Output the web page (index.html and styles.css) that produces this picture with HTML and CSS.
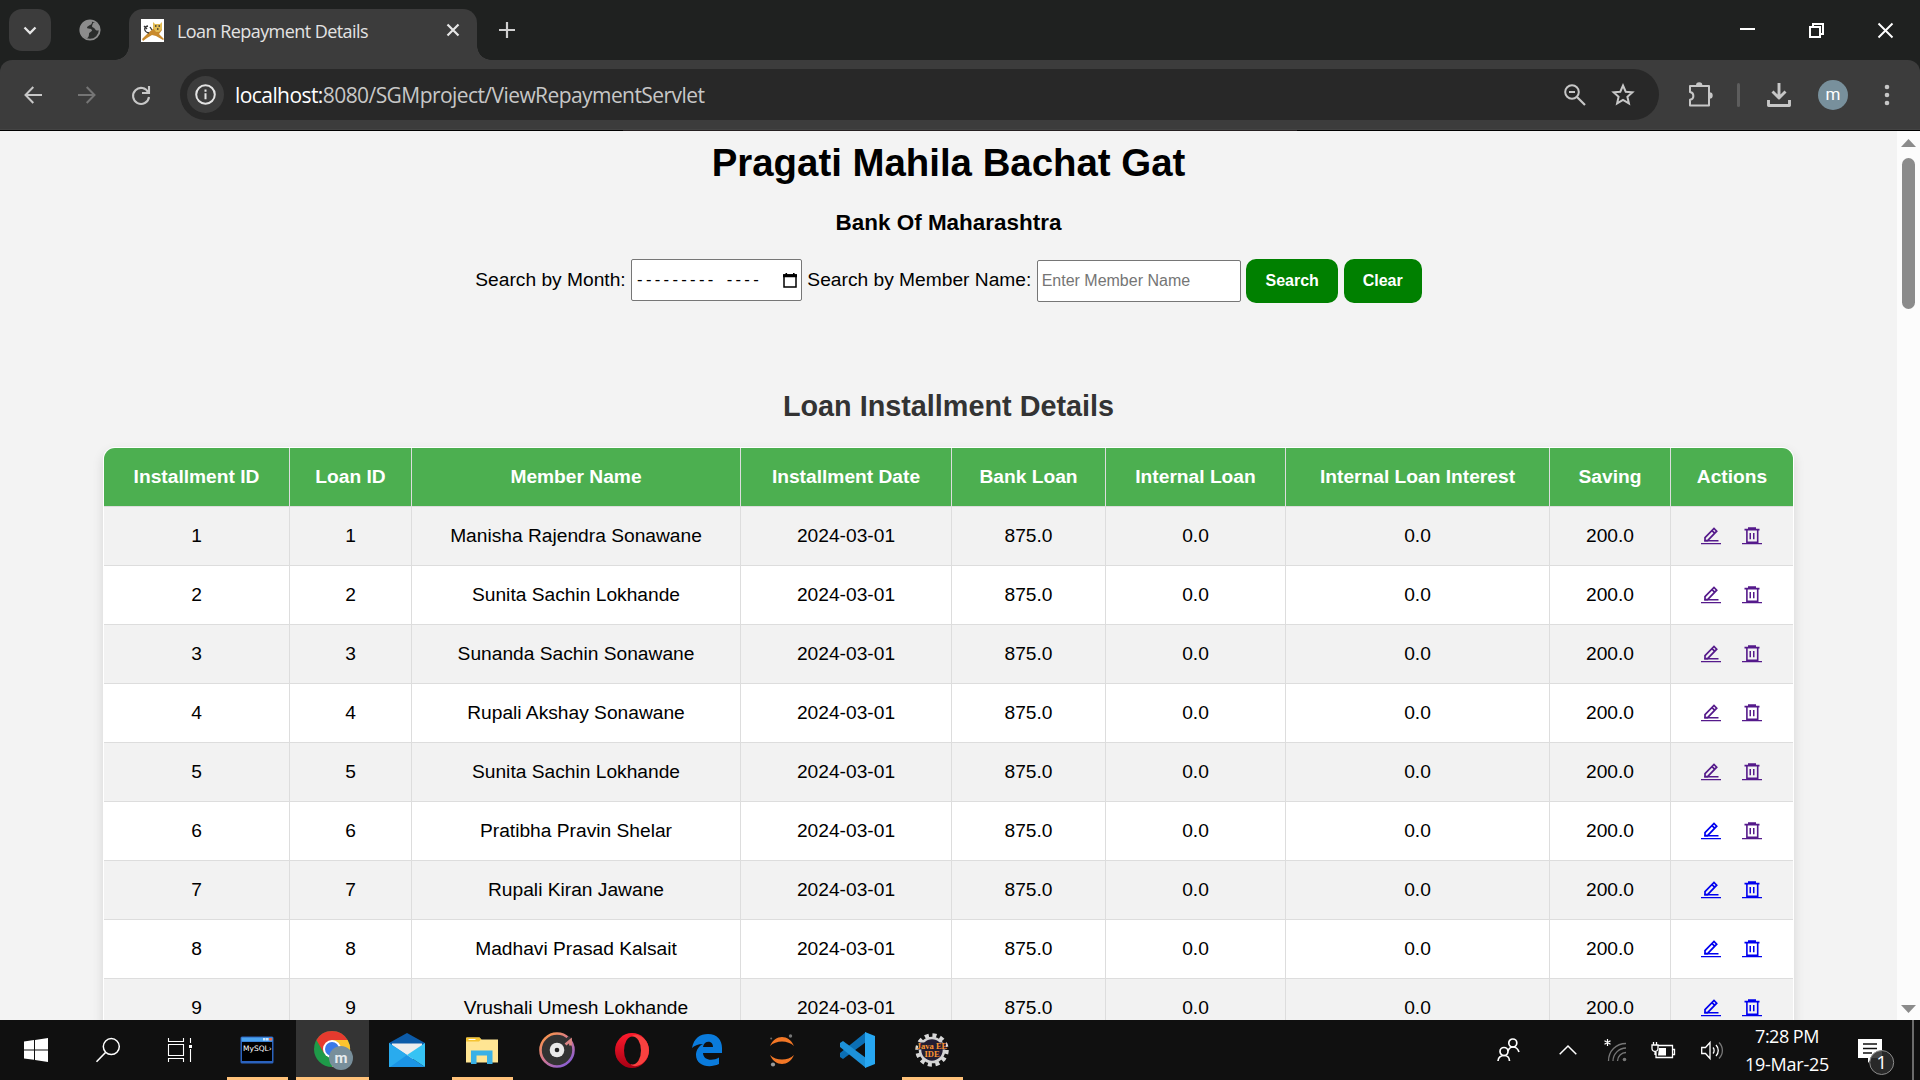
FILE: index.html
```html
<!DOCTYPE html>
<html lang="en">
<head>
<meta charset="utf-8">
<title>Loan Repayment Details</title>
<link rel="stylesheet" href="styles.css">
</head>
<body>
<svg class="defs" aria-hidden="true">
  <symbol id="edit" viewBox="0 0 20 18"><path d="M4 13.700V10.600L13 1.500L15.700 4.200L6.600 13.700zM11 3.600L13.600 6.200" fill="none" stroke="currentColor" stroke-width="1.700"/><path d="M3.300 13h14.200v1.500H3.300zM0 16h20v1.200H0z" fill="currentColor"/></symbol>
  <symbol id="trash" viewBox="0 0 20 18"><path d="M6 .3h8v1.5h3.500v1.600h-15V1.800h3.500zM0 16h20v1.200H0z" fill="currentColor"/><path d="M4.900 3v12.400h10.800V3" fill="none" stroke="currentColor" stroke-width="1.600"/><path d="M7.500 6h1.500v6.300H7.500zM11 6h1.500v6.300H11z" fill="currentColor"/></symbol>
</svg>
<div class="screen">
  <header class="tabstrip">
    <div class="tab-menu"><svg width="14" height="9" viewBox="0 0 14 9"><path d="M1.500 1.500L7 7l5.500-5.500" fill="none" stroke="#e6e6e6" stroke-width="2.300"/></svg></div>
    <svg class="globe" width="22" height="22" viewBox="0 0 22 22"><circle cx="11" cy="11" r="9.700" fill="#2b2d2c" stroke="#8c8c8c" stroke-width="1.800"/><path d="M1 10C2 5 6 1 12 1.500c2 1 1 4-1 4.500-1 1-3 1-3 3 1 1 4 0 5 2 0 2-3 2-3 4s-1 5-3 4C4 18 1 14 1 10zM14 4c3-1 6 2 7 6-1 2-4 2-5 0s-3-1-3-3z" fill="#8c8c8c"/></svg>
    <div class="tab">
      <svg width="23" height="23" viewBox="0 0 23 23"><path fill="#fff" d="M0 0h23v23H0z"/><path d="M1 20l6-6 5-4 2-3h6l1 4-3 4 5 5-1 1-7-4-4-1-5 3-4 3z" fill="#c98a2c"/><path d="M12 3l2 2h5l2-2v7l-3 3h-3l-3-4z" fill="#e2bc55"/><path d="M8 14C3 13 2 8 7 7M3 7l3 3M9 8l2 3M14 7h1.500m2 0H19M16 10h1.500" stroke="#333" stroke-width="1.300" fill="none"/></svg>
      <span class="tab-title">Loan Repayment Details</span>
      <svg width="14" height="14" viewBox="0 0 14 14"><path d="M1.500 1.500l11 11m0-11l-11 11" stroke="#e6e6e6" stroke-width="2.200"/></svg>
    </div>
    <svg class="new-tab" width="16" height="16" viewBox="0 0 16 16"><path d="M8 0v16M0 8h16" stroke="#d0d0d0" stroke-width="2.200"/></svg>
    <div class="win-controls">
      <svg width="15" height="16" viewBox="0 0 15 16"><path d="M0 6h15v2H0z" fill="#fff"/></svg>
      <svg width="15" height="15" viewBox="0 0 15 15"><path d="M1 4h10v10H1zM4 4V1h10v10h-3" fill="none" stroke="#fff" stroke-width="2"/></svg>
      <svg width="15" height="15" viewBox="0 0 15 15"><path d="M.5.5l14 14m0-14l-14 14" stroke="#fff" stroke-width="1.900"/></svg>
    </div>
  </header>
  <div class="toolbar-wrap">
  <nav class="toolbar">
    <div class="nav-buttons">
      <svg width="18" height="18" viewBox="0 0 18 18"><path d="M18 9H1.500M9.300 1L1.500 9l7.800 8" fill="none" stroke="#c7c7c7" stroke-width="2"/></svg>
      <svg width="18" height="18" viewBox="0 0 18 18"><path d="M0 9h16.500M8.700 1l7.800 8-7.800 8" fill="none" stroke="#757575" stroke-width="2"/></svg>
      <svg class="reload" width="20" height="20" viewBox="0 0 20 20"><path d="M17.300 7.500A8 8 0 1 0 18 12M18 1v7h-7" fill="none" stroke="#c7c7c7" stroke-width="2.100"/></svg>
    </div>
    <div class="omnibox">
      <span class="site-info"><svg width="21" height="21" viewBox="0 0 21 21"><circle cx="10.500" cy="10.500" r="9.300" fill="none" stroke="#e3e3e3" stroke-width="2"/><path d="M9.500 9.300h2v6h-2zM9.500 5.500h2v2.200h-2z" fill="#e3e3e3"/></svg></span>
      <span class="url"><b>localhost:</b>8080/SGMproject/ViewRepaymentServlet</span>
      <svg class="lens" width="22" height="22" viewBox="0 0 22 22"><circle cx="8" cy="8" r="6.800" fill="none" stroke="#c7c7c7" stroke-width="2"/><path d="M5 8h6M13 13l8 8" stroke="#c7c7c7" stroke-width="2.200"/></svg>
      <svg width="24" height="23" viewBox="0 0 24 23"><path d="M12 2.500l2.700 6.200 6.700.6-5 4.500 1.500 6.600-5.900-3.500-5.900 3.500 1.500-6.600-5-4.500 6.700-.6z" fill="none" stroke="#c7c7c7" stroke-width="2"/></svg>
    </div>
    <svg class="puzzle" width="26" height="26" viewBox="0 0 26 26"><path d="M3 4h19v19.500H3v-5.700c4.500-.8 4.500-7 0-7.800z" fill="none" stroke="#c7c7c7" stroke-width="2" stroke-linejoin="round"/><path d="M9 3.500a3.200 3.200 0 0 1 6.400 0zM22.500 10.300a3.200 3.200 0 0 1 0 6.400z" fill="#c7c7c7"/></svg>
    <i class="divider"></i>
    <svg class="download" width="24" height="24" viewBox="0 0 24 24"><path d="M12 0v14M5.500 8.500L12 15l6.500-6.500M1.500 17v5.500h21V17" fill="none" stroke="#c7c7c7" stroke-width="2.900" stroke-linejoin="round"/></svg>
    <span class="avatar">m</span>
    <svg width="6" height="22" viewBox="0 0 6 22"><g fill="#c7c7c7"><circle cx="3" cy="3" r="2.300"/><circle cx="3" cy="11" r="2.300"/><circle cx="3" cy="19" r="2.300"/></g></svg>
  </nav>
  </div>
  <div class="edge"><i></i></div>
  <div class="viewport">
    <main class="page">
      <h1>Pragati Mahila Bachat Gat</h1>
      <h3>Bank Of Maharashtra</h3>
      <form class="search">
        <label>Search by Month:</label>
        <div class="month"><span>---------</span><span>----</span><svg width="14" height="15" viewBox="0 0 14 15"><path d="M1 2h12v12H1z" fill="none" stroke="#000" stroke-width="1.500"/><path d="M0 1.200h14V4.200H0zM2.500 0h1.600v2H2.500zM10 0h1.600v2H10z"/></svg></div>
        <label>Search by Member Name:</label>
        <input class="member" type="text" placeholder="Enter Member Name">
        <button class="btn btn-search" type="button">Search</button>
        <button class="btn btn-clear" type="button">Clear</button>
      </form>
      <h2>Loan Installment Details</h2>
      <table class="loans">
        <colgroup><col class="c-id"><col class="c-loan"><col class="c-name"><col class="c-date"><col class="c-bank"><col class="c-int"><col class="c-rate"><col class="c-save"><col class="c-act"></colgroup>
        <thead><tr><th>Installment ID</th><th>Loan ID</th><th>Member Name</th><th>Installment Date</th><th>Bank Loan</th><th>Internal Loan</th><th>Internal Loan Interest</th><th>Saving</th><th>Actions</th></tr></thead>
        <tbody>
        <tr><td>1</td><td>1</td><td>Manisha Rajendra Sonawane</td><td>2024-03-01</td><td>875.0</td><td>0.0</td><td>0.0</td><td>200.0</td><td><div class="actions"><svg class="visited"><use href="#edit"/></svg><svg class="visited"><use href="#trash"/></svg></div></td></tr>
        <tr><td>2</td><td>2</td><td>Sunita Sachin Lokhande</td><td>2024-03-01</td><td>875.0</td><td>0.0</td><td>0.0</td><td>200.0</td><td><div class="actions"><svg class="visited"><use href="#edit"/></svg><svg class="visited"><use href="#trash"/></svg></div></td></tr>
        <tr><td>3</td><td>3</td><td>Sunanda Sachin Sonawane</td><td>2024-03-01</td><td>875.0</td><td>0.0</td><td>0.0</td><td>200.0</td><td><div class="actions"><svg class="visited"><use href="#edit"/></svg><svg class="visited"><use href="#trash"/></svg></div></td></tr>
        <tr><td>4</td><td>4</td><td>Rupali Akshay Sonawane</td><td>2024-03-01</td><td>875.0</td><td>0.0</td><td>0.0</td><td>200.0</td><td><div class="actions"><svg class="visited"><use href="#edit"/></svg><svg class="visited"><use href="#trash"/></svg></div></td></tr>
        <tr><td>5</td><td>5</td><td>Sunita Sachin Lokhande</td><td>2024-03-01</td><td>875.0</td><td>0.0</td><td>0.0</td><td>200.0</td><td><div class="actions"><svg class="visited"><use href="#edit"/></svg><svg class="visited"><use href="#trash"/></svg></div></td></tr>
        <tr><td>6</td><td>6</td><td>Pratibha Pravin Shelar</td><td>2024-03-01</td><td>875.0</td><td>0.0</td><td>0.0</td><td>200.0</td><td><div class="actions"><svg><use href="#edit"/></svg><svg class="visited"><use href="#trash"/></svg></div></td></tr>
        <tr><td>7</td><td>7</td><td>Rupali Kiran Jawane</td><td>2024-03-01</td><td>875.0</td><td>0.0</td><td>0.0</td><td>200.0</td><td><div class="actions"><svg><use href="#edit"/></svg><svg><use href="#trash"/></svg></div></td></tr>
        <tr><td>8</td><td>8</td><td>Madhavi Prasad Kalsait</td><td>2024-03-01</td><td>875.0</td><td>0.0</td><td>0.0</td><td>200.0</td><td><div class="actions"><svg><use href="#edit"/></svg><svg><use href="#trash"/></svg></div></td></tr>
        <tr><td>9</td><td>9</td><td>Vrushali Umesh Lokhande</td><td>2024-03-01</td><td>875.0</td><td>0.0</td><td>0.0</td><td>200.0</td><td><div class="actions"><svg><use href="#edit"/></svg><svg><use href="#trash"/></svg></div></td></tr>
        </tbody>
      </table>
    </main>
    <aside class="scrollbar">
      <svg width="15" height="8" viewBox="0 0 15 8"><path d="M7.500 0L15 8H0z" fill="#8b8b8b"/></svg>
      <i class="thumb"></i>
      <svg class="down" width="15" height="8" viewBox="0 0 15 8"><path d="M0 0h15L7.500 8z" fill="#8b8b8b"/></svg>
    </aside>
  </div>
  <footer class="taskbar">
    <div class="sys"><svg width="24" height="24" viewBox="0 0 24 24"><path d="M0 3.500l10-1.400v9.300H0zM11 2l13-2v11.400H11zM0 12.500h10v9.300L0 20.500zM11 12.500h13V24l-13-2z" fill="#fff"/></svg></div>
    <div class="sys"><svg width="24" height="24" viewBox="0 0 24 24"><circle cx="15.300" cy="8.600" r="8" fill="none" stroke="#fff" stroke-width="1.500"/><path d="M9.500 14.500L.500 23.800" stroke="#fff" stroke-width="1.600"/></svg></div>
    <div class="sys"><svg width="24" height="24" viewBox="0 0 24 24"><path d="M.5 0v3.500h15V0M.5 6.500h15v11h-15zM.5 24v-3.500h15V24M22.500 0v5M22.500 11v13" fill="none" stroke="#fff" stroke-width="1.100"/><path d="M21 7h3v3h-3z" fill="#fff"/></svg></div>
    <div class="apps">
      <div class="app running"><svg width="34" height="28" viewBox="0 0 34 28"><rect x=".5" y=".5" width="33" height="27" rx="1.500" fill="#2b62bd"/><path d="M1.500 1.500h31v4h-31z" fill="#4ba3ee"/><path d="M23 2h2.500v2.500H23zM26 2h2.500v2.500H26z" fill="#cde7ff"/><path d="M29 2h3v2.500h-3z" fill="#e46c4a"/><path d="M2 6h30v19H2z" fill="#000"/><text x="3" y="14.500" class="mysql">MySQL›</text></svg></div>
      <div class="app active"><svg width="40" height="40" viewBox="0 0 40 40"><circle cx="18" cy="18" r="18" fill="#1e9a48"/><path d="M2.400 9A18 18 0 0 1 33.600 9H18l-7.800 13.500z" fill="#e63a2e"/><path d="M33.600 9A18 18 0 0 1 18 36l7.800-13.500L18 9z" fill="#fcc42d"/><circle cx="18" cy="18" r="9" fill="#fff"/><circle cx="18" cy="18" r="7" fill="#3b79e8"/><circle cx="27" cy="27" r="12" fill="#788f9b"/><text x="27" y="31.500" class="badge-m">m</text></svg></div>
      <div class="app"><svg width="36" height="34" viewBox="0 0 36 34"><path d="M0 10L18 0l18 10v12H0z" fill="#0c5ba8"/><path d="M3 10.500h30V21L18 29 3 21z" fill="#ededed"/><path d="M0 10l18 12L36 34H0z" fill="#1b94e5"/><path d="M0 10l18 12L1 34H0z" fill="#29abee"/><path d="M36 10v24L18 22z" fill="#36c3f4"/></svg></div>
      <div class="app running"><svg width="32" height="27" viewBox="0 0 32 27"><path d="M0 1.500Q0 .5 1 .5h12.500l2 2H32v23H0z" fill="#ffe593"/><path d="M0 4.500V1.500Q0 .500 1 .500h12.500l1.500 2-2 2z" fill="#f5c431"/><path d="M2.500 2h7v1h-7z" fill="#fff"/><path d="M5 27V13.500h21.500V27H21v-8.500H10.500V27z" fill="#3ab1e6"/></svg></div>
      <div class="app"><svg width="36" height="36" viewBox="0 0 36 36"><defs><linearGradient id="ring" x1="0" y1="0" x2=".8" y2="1"><stop offset="0" stop-color="#ff9a3c"/><stop offset=".5" stop-color="#d77a8e"/><stop offset="1" stop-color="#855cd6"/></linearGradient></defs><circle cx="18" cy="18" r="16.500" fill="#333" stroke="url(#ring)" stroke-width="2.600"/><circle cx="18" cy="18" r="7.300" fill="#e9e9e9"/><circle cx="18" cy="18" r="2.300" fill="#222"/><path d="M31 5l-5 5" stroke="#333" stroke-width="3.500"/><path d="M26.500 12.500l5-4v5" fill="none" stroke="#dc8585" stroke-width="2.800"/></svg></div>
      <div class="app"><svg width="34" height="35" viewBox="0 0 34 35"><defs><linearGradient id="op" x1="0" y1="0" x2="0" y2="1"><stop offset="0" stop-color="#ff1b2d"/><stop offset="1" stop-color="#a70014"/></linearGradient></defs><ellipse cx="17" cy="17.500" rx="17" ry="17.500" fill="url(#op)"/><path d="M17 3c5-4 17 3 17 14.500S22 36 16 32z" fill="#f9413f"/><ellipse cx="17.500" cy="17.500" rx="8.500" ry="14" fill="#101010"/></svg></div>
      <div class="app"><svg width="30" height="32" viewBox="0 0 30 32"><path d="M0 14C2 4 8 0 16 0c9 0 14 6 14 14v5H11c.5 8 10 8 16 4.500V30C16 35 4 31 4 21c0-5 3-9 7-11-5 0-9 2-11 4zm11-1h10c0-7-9-7-10 0z" fill="#0a7bdc"/></svg></div>
      <div class="app"><svg width="24" height="33" viewBox="0 0 24 33"><path d="M0 12C5 0 19 0 24 12 18 6 6 6 0 12zM0 21c6 6 18 6 24 0-5 12-19 12-24 0z" fill="#f37726"/><circle cx="20.500" cy="2" r="1.700" fill="#777"/><circle cx="3" cy="30.500" r="2.100" fill="#999"/><circle cx="1.200" cy="4.500" r="1" fill="#666"/></svg></div>
      <div class="app"><svg width="36" height="36" viewBox="0 0 36 36"><path d="M1 25l3 2 23-17V0L1 21z" fill="#0b6fb5"/><path d="M1 11l3-2 23 17v10L1 15z" fill="#1d91d8"/><path d="M26 0l10 4v28l-10 4z" fill="#27a7f2"/></svg></div>
      <div class="app running"><svg width="34" height="34" viewBox="0 0 34 34"><circle cx="17" cy="17" r="14.500" fill="none" stroke="#d8d8d8" stroke-width="4.500" stroke-dasharray="4 3.592"/><circle cx="17" cy="17" r="12" fill="#221d33" stroke="#d3d3d3" stroke-width="2.600"/><path d="M3 9.500h28v7H3z" fill="#221d33"/><text x="17" y="15.700" class="ide">Java EE</text><text x="17" y="23.500" class="ide">IDE</text></svg></div>
    </div>
    <div class="tray">
      <svg class="people" width="23" height="24" viewBox="0 0 23 24"><g fill="none" stroke="#fff" stroke-width="1.700"><circle cx="15.800" cy="5" r="4"/><path d="M11 13c1-3 3-4 5-4 3 0 5 2 6 5"/><circle cx="7" cy="13.500" r="4"/><path d="M1 23c0-3.500 3-5.500 6-5.500s5.500 2 5.500 5.500"/></g></svg>
      <svg class="chev" width="18" height="10" viewBox="0 0 18 10"><path d="M.700 9.300L9 1l8.300 8.300" fill="none" stroke="#fff" stroke-width="1.500"/></svg>
      <svg class="wifi" width="23" height="23" viewBox="0 0 23 23"><g fill="none" stroke="#777" stroke-width="1.300"><path d="M4.500 22C4.500 12 12 4.500 22 4.500M9 22c0-7 6-13 13-13M13.500 22c0-4.500 4-8.500 8.500-8.500"/></g><circle cx="20.500" cy="20.500" r="1.800" fill="#777"/><path d="M3.500 0v7M.500 1.700l6 3.600M6.500 1.700l-6 3.600" stroke="#fff" stroke-width="1.200"/></svg>
      <svg class="battery" width="24" height="17" viewBox="0 0 24 17"><path d="M7 3.500h14.500v12H5V10M22 7.500h1.500v5H22M1 3h6v3.500a3 3 0 0 1-6 0zM2.500 3V0M5.500 3V0M4 9v4" fill="none" stroke="#fff" stroke-width="1.300"/><path d="M8 6h7v7.500H7z" fill="#fff"/></svg>
      <svg class="speaker" width="22" height="19" viewBox="0 0 22 19"><path d="M.7 6.500h3.800L9 1.500v16l-4.500-5H.7zM12 6.500c1.500 1.500 1.500 4.500 0 6M15 4c3 3 3 8 0 11" fill="none" stroke="#fff" stroke-width="1.300"/><path d="M18 1.500c4.500 4.500 4.500 11.500 0 16" fill="none" stroke="#777" stroke-width="1.300"/></svg>
      <div class="clock"><span class="time">7:28 PM</span><span class="date">19-Mar-25</span></div>
      <svg class="notify" width="38" height="38" viewBox="0 0 38 38"><path d="M0 1h24v19H14l-4 5v-5H0z" fill="#fff"/><path d="M5 6h14M5 10.500h14M5 15h9" stroke="#101010" stroke-width="1.300"/><circle cx="23.700" cy="24.500" r="12" fill="#2b2b2b" fill-opacity=".88" stroke="#8a8a8a" stroke-width="1"/><text x="23.700" y="31" class="count">1</text></svg>
    </div>
  </footer>
</div>
</body>
</html>
```
FILE: styles.css
```css
* { box-sizing: border-box; }
body { margin: 0; font-family: "Liberation Sans", Arial, sans-serif; font-size: 19.2px; color: #000; overflow: hidden; }
svg { display: block; flex: none; overflow: visible; }
.defs { display: none; }
.screen { width: 1920px; height: 1080px; display: flex; flex-direction: column; overflow: hidden; background: #1f2120; }

.tabstrip { height: 60px; flex: none; display: flex; align-items: center; padding-left: 9px; }
.tab-menu { width: 42px; height: 42px; border-radius: 13px; background: #3c3c3c; display: grid; place-items: center; }
.globe { margin-left: 28px; }
.tab { position: relative; align-self: flex-end; width: 348px; height: 51px; margin-left: 28px; padding: 0 17px 9px 12px; display: flex; align-items: center; background: #3c3c3c; border-radius: 14px 14px 0 0; }
.tab::before, .tab::after { content: ""; position: absolute; bottom: 0; width: 14px; height: 14px; }
.tab::before { left: -14px; background: radial-gradient(circle at 0 0, transparent 13.5px, #3c3c3c 14px); }
.tab::after { right: -14px; background: radial-gradient(circle at 100% 0, transparent 13.5px, #3c3c3c 14px); }
.tab-title { margin-left: 13px; flex: 1; font: 18px/24px "Open Sans", "Noto Sans", sans-serif; letter-spacing: -.56px; color: #e3e3e3; white-space: nowrap; padding-top: 2px; }
.new-tab { margin-left: 22px; }
.win-controls { margin-left: auto; padding-right: 27px; display: flex; gap: 54px; align-items: center; }

.toolbar-wrap { flex: none; height: 69px; background: #1f2120; }
.toolbar { height: 69px; background: #3c3c3c; border-radius: 12px 12px 0 0; display: flex; align-items: center; padding: 0 30px 0 24px; }
.toolbar > * { flex: none; }
.nav-buttons { display: flex; align-items: center; gap: 36px; width: 156px; }
.reload { margin-left: -1px; }
.omnibox { width: 1479px; height: 51px; border-radius: 26px; background: #282828; display: flex; align-items: center; padding: 0 24px 0 7px; }
.site-info { width: 37px; height: 37px; border-radius: 50%; background: #3c3c3c; display: grid; place-items: center; }
.url { margin-left: 11px; flex: 1; font: 21px/28px "Open Sans", "Noto Sans", sans-serif; letter-spacing: -.57px; color: #c7c7c7; }
.url b { font-weight: 400; color: #fff; }
.lens { margin-right: 25px; }
.puzzle { margin-left: 28px; }
.divider { width: 3px; height: 24px; border-radius: 2px; background: #5d5d5d; margin-left: 24px; }
.download { margin-left: 27px; }
.avatar { width: 30px; height: 30px; border-radius: 50%; background: #78909c; color: #fff; font: 17px/29px Roboto, sans-serif; text-align: center; margin: 0 36px 0 27px; }
.edge { height: 2px; flex: none; background: linear-gradient(#444 50%, #000 50%); display: flex; justify-content: center; align-items: flex-end; }
.edge i { width: 674px; height: 1px; background: #252021; }

.viewport { height: 889px; flex: none; display: flex; background: #f3f3f3; overflow: hidden; }
.page { width: 1897px; height: 889px; overflow: hidden; display: flex; flex-direction: column; align-items: center; padding-top: 9px; }
h1, h2, h3 { margin: 0; flex: none; }
h1 { font-size: 38.4px; line-height: 46px; }
h3 { font-size: 22.46px; line-height: 28px; margin-top: 23px; }
.search { display: flex; gap: 5.33px; align-items: center; height: 44px; margin-top: 22px; flex: none; }
.search label { line-height: 40px; padding-bottom: 3px; white-space: nowrap; }
.month, .member { border: 1px solid #767676; background: #fff; height: 42px; border-radius: 2px; }
.month { width: 171px; margin-bottom: 2px; padding: 0 4px 0 5px; display: flex; align-items: center; font-size: 16.67px; }
.month span { letter-spacing: 3.3px; white-space: nowrap; }
.month span + span { margin-left: 10px; }
.month svg { margin-left: auto; }
.member { width: 204px; padding: 1px 4px; font: 16px "Liberation Sans", Arial, sans-serif; }
.member::placeholder { color: #757575; }
.btn { height: 44px; border: 0; border-radius: 10px; padding: 0; background: #008000; color: #fff; font: bold 16px "Liberation Sans", Arial, sans-serif; }
.btn-search { width: 92.4px; }
.btn-clear { width: 78px; }
h2 { font-size: 28.8px; line-height: 36px; color: #333; margin-top: 85px; }

.loans { width: 1691px; flex: none; margin-top: 23px; table-layout: fixed; border-collapse: separate; border-spacing: 0; border: 1px solid #fff; border-bottom: 0; border-radius: 12px; background: #fff; box-shadow: 0 5px 12px rgba(0,0,0,.12); overflow: hidden; }
.c-id { width: 185px; } .c-loan { width: 122px; } .c-name { width: 329px; } .c-date { width: 211px; } .c-bank { width: 154px; } .c-int { width: 180px; } .c-rate { width: 264px; } .c-save { width: 121px; } .c-act { width: 123px; }
.loans th, .loans td { padding: 0; text-align: center; white-space: nowrap; border-left: 1px solid #ddd; }
.loans th:first-child, .loans td:first-child { border-left: 0; }
.loans th { height: 58px; background: #4caf50; color: #fff; line-height: 58px; }
.loans td { height: 59px; border-top: 1px solid #ddd; line-height: 58px; }
.loans tbody tr:nth-child(odd) { background: #f2f2f2; }
.actions { display: flex; justify-content: center; gap: 21.5px; padding-right: 1px; color: #00e; }
.actions svg { width: 20px; height: 18px; }
.actions .visited { color: #551a8b; }

.scrollbar { width: 23px; background: #fcfcfc; display: flex; flex-direction: column; align-items: center; padding: 8px 0 7px; }
.thumb { width: 13px; height: 151px; margin-top: 11px; border-radius: 7px; background: #8b8b8b; }
.down { margin-top: auto; }

.taskbar { height: 60px; flex: none; background: #101010; display: flex; align-items: center; }
.sys { width: 72px; display: grid; place-items: center; }
.apps { display: flex; gap: 2px; margin-left: 5px; height: 60px; }
.app { width: 73px; height: 60px; display: grid; place-items: center; }
.app svg { margin-right: 1px; }
.running { background: linear-gradient(#ffc27a, #ffc27a) bottom center / 61px 3px no-repeat; }
.active { background: #343434; border-bottom: 3px solid #ffc27a; }
.active svg { margin: 5px 0 0 3px; }
.mysql { font: 7.5px "DejaVu Sans", sans-serif; fill: #fff; }
.badge-m { font: bold 15px Roboto, sans-serif; fill: #e6ebee; text-anchor: middle; }
.ide { font: bold 8.5px "Liberation Serif", serif; fill: #ff9430; text-anchor: middle; }
.tray { margin-left: auto; display: flex; align-items: center; height: 60px; padding-right: 16px; border-right: 2px solid #6b6b6b; margin-right: 6px; }
.chev { margin-left: 39px; }
.wifi { margin-left: 27px; }
.battery { margin-left: 24px; margin-right: 1px; }
.speaker { margin-left: 25px; }
.clock { width: 90px; margin-left: 19px; margin-right: 1px; display: flex; flex-direction: column; align-items: center; font: 18px/28px "Open Sans", "Noto Sans", sans-serif; letter-spacing: -.5px; color: #fff; }
.date { letter-spacing: -.25px; }
.notify { margin: 14px 0 0 25px; }
.count { font: 19px "Open Sans", sans-serif; fill: #fff; text-anchor: middle; }
```
